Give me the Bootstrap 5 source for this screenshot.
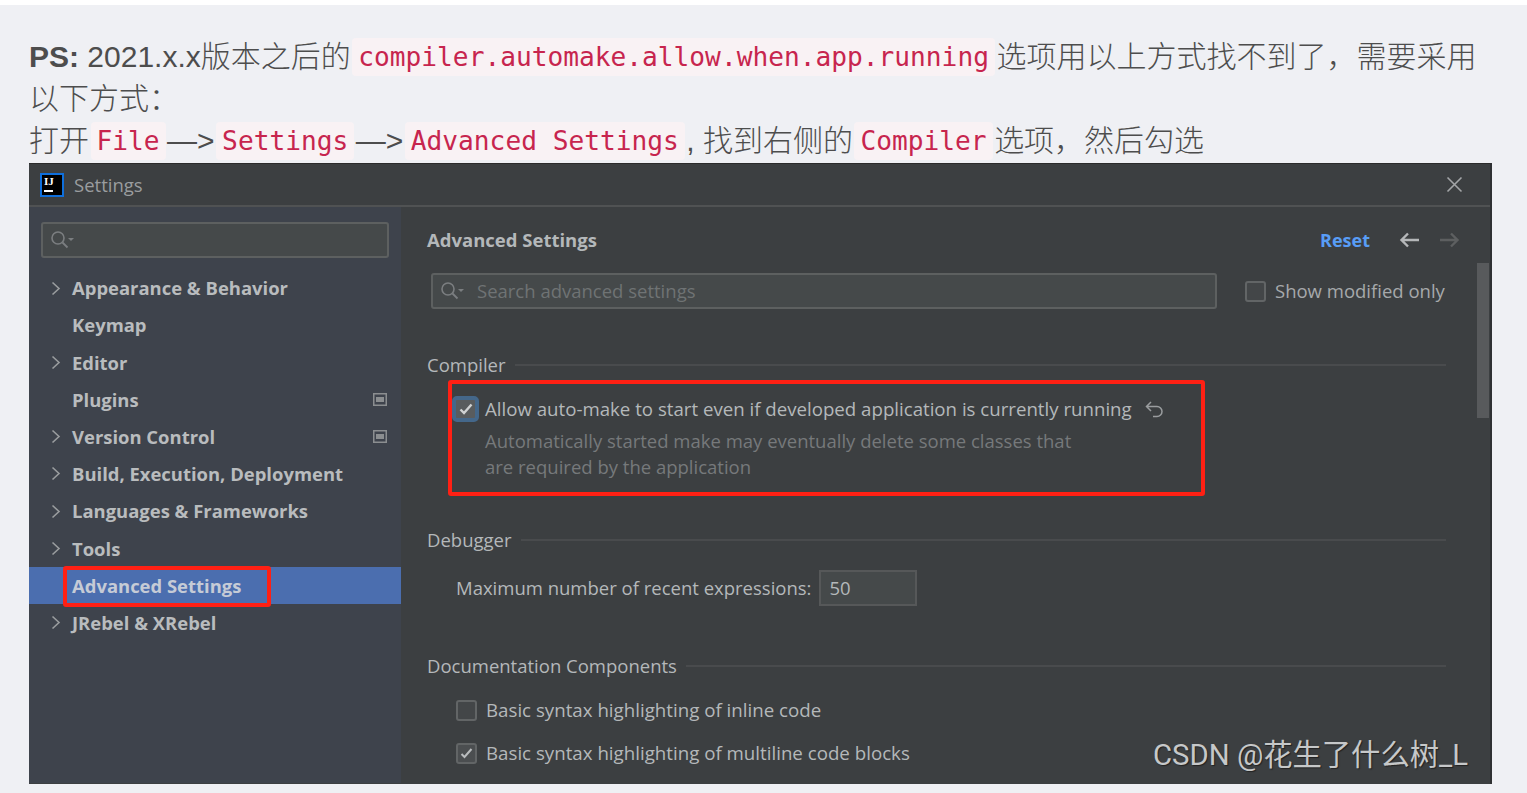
<!DOCTYPE html>
<html lang="zh-CN">
<head>
<meta charset="utf-8">
<title>Settings</title>
<link href="https://cdn.jsdelivr.net/npm/bootstrap@5.3.0/dist/css/bootstrap.min.css" rel="stylesheet">
<style>
html,body{height:793px;overflow:hidden;background:#fff}
.page-bg{margin-top:5px;height:788px;background:#eff0f4;padding:31px 35px 0 29px;overflow:hidden}
.post-text{margin:0;font:300 30px/42px "Liberation Sans","Noto Sans CJK SC",sans-serif;color:#4d4d4d;height:127px}
.post-text b{font-weight:700}
.post-text code{font:26.2px/38px "DejaVu Sans Mono",monospace;color:#c7254e;background:#f9f2f4;padding:4px 6px;border-radius:4px;margin:0 1.5px;vertical-align:1px}
.ide{position:relative;height:621px;background:#3c3f41;border-top:1px solid #2b2b2b;border-right:2px solid #2f3133;overflow:hidden;font-family:"Open Sans",sans-serif;font-size:18.5px;color:#b4b8ba}
.ide-title{height:43px;border-bottom:2px solid #505253;padding-left:11px;gap:10px}
.ide-logo{width:24px;height:24px;background:#000;border:2px solid #0f6fdc;color:#fff;font:700 11px/12px "Liberation Serif",serif;padding-left:2px}
.ide-logo i{display:block;width:9px;height:2px;background:#fff;margin-top:3px}
.ide-title-text{color:#9a9d9f;font-size:18.5px;padding-top:1px}
.ide-close{margin-left:auto;margin-right:27px}
.ide-body{height:576px}
.ide-side{width:372px;background:#3e434c;flex:none;padding-top:15px}
.ide-search{background:#45494a;border:2px solid #5d6060;border-radius:3px;height:36px;padding-left:7px;gap:8px;color:#777}
.ide-search-side{margin:0 12px 11.5px;width:348px}
.ide-row{position:relative;height:37.2px;padding-left:43px;font-weight:700;font-size:18.45px;color:#b9bcbe;white-space:nowrap}
.ide-row.is-active{background:#4b6eaf;color:#c5cbd6}
.ide-chev{position:absolute;left:22px;top:11px}
.ide-mod{margin-left:auto;margin-right:14px}
.ide-redmark{position:absolute;left:34px;top:-1px;width:208px;height:41px;border:4px solid #ff2014;border-radius:3px}
.ide-main{flex:1;min-width:0;padding:15px 0 0 26px;position:relative}
.ide-h{height:36px;font-weight:700;font-size:18.5px;padding-right:30px}
.ide-reset{margin-left:auto;color:#589df6;font-weight:700;font-size:18px;margin-right:29px}
.ide-arrows{gap:21px}
.ide-top{margin-top:15px}
.ide-search-main{width:786px;margin:0 28px 0 4px;color:#777}
.ide-search-main span{font-size:18.5px;color:#6f7374;margin-left:5px}
.ide-box{width:21px;height:21px;border:2px solid #626566;border-radius:3px;background:#434648;flex:none}
.ide-box.checked{background:#4b4e50}
.ide-checkrow{gap:9px}
.ide-topcheck{color:#a6a9ab}
.ide-group{position:relative;padding-right:44px;gap:9px}
.ide-group::after{content:"";flex:1;height:2px;background:#494b4d}
.ide-g1{margin-top:44px;height:24px}
.ide-red{width:757px;height:116px;margin:3px 0 0 21px;border:4px solid #ff2014;border-radius:3px;padding:11px 0 0 0}
.ide-toprow{gap:6px}
.ide-focus{width:27px;height:26px;border:4px solid #44678a;border-radius:5px;background:#595c5e;flex:none}
.ide-label{color:#b4b8ba;white-space:nowrap;font-size:18.67px}
.ide-undo{margin-left:7px}
.ide-desc{color:#76797b;padding-left:33px;line-height:26px;margin-top:5px}
.ide-g2{margin-top:32px;height:24px}
.ide-max{margin:18px 0 0 29px;gap:8px}
.ide-input{width:98px;height:36px;border:2px solid #565859;background:#45494a;padding-left:8px}
.ide-g3{margin-top:48px;height:24px}
.ide-opt{font-size:18.72px}
.ide-o1{margin:20px 0 0 29px;height:24px}
.ide-o2{margin:19px 0 0 29px;height:24px}
.ide-scroll{position:absolute;right:1px;top:56px;width:12px;height:155px;background:#585a5c}
.ide-mark{position:absolute;right:22px;bottom:11px;font:29.3px/36px Roboto,"Noto Sans CJK SC",sans-serif;color:#c6c8c9;text-shadow:1px 1px 1px #222;white-space:nowrap}
</style>
</head>
<body>
<div class="page-bg">
  <p class="post-text"><b>PS:</b> 2021.x.x版本之后的<code>compiler.automake.allow.when.app.running</code>选项用以上方式找不到了，需要采用以下方式：<br>打开<code>File</code>—&gt;<code>Settings</code>—&gt;<code>Advanced Settings</code>, 找到右侧的<code>Compiler</code>选项，然后勾选</p>
  <div class="ide">
    <div class="ide-title d-flex align-items-center">
      <div class="ide-logo">IJ<i></i></div>
      <span class="ide-title-text">Settings</span>
      <svg class="ide-close" width="17" height="17" viewBox="0 0 17 17"><path d="M1.5 1.5l14 14M15.5 1.5l-14 14" stroke="#a3a5a7" stroke-width="1.6" fill="none"/></svg>
    </div>
    <div class="ide-body d-flex">
      <aside class="ide-side">
        <div class="ide-search ide-search-side d-flex align-items-center">
          <svg width="24" height="22" viewBox="0 0 24 22"><circle cx="8" cy="9" r="6" fill="none" stroke="#7b7e80" stroke-width="1.6"/><path d="M12.5 13.5l5 5" stroke="#7b7e80" stroke-width="1.8"/><path d="M18 9h6l-3 3z" fill="#7b7e80"/></svg>
        </div>
        <div class="ide-row d-flex align-items-center"><svg class="ide-chev" width="10" height="15" viewBox="0 0 10 15"><path d="M1.5 1.5l6.5 6-6.5 6" fill="none" stroke="#9a9d9f" stroke-width="1.6"/></svg>Appearance &amp; Behavior</div>
        <div class="ide-row d-flex align-items-center">Keymap</div>
        <div class="ide-row d-flex align-items-center"><svg class="ide-chev" width="10" height="15" viewBox="0 0 10 15"><path d="M1.5 1.5l6.5 6-6.5 6" fill="none" stroke="#9a9d9f" stroke-width="1.6"/></svg>Editor</div>
        <div class="ide-row d-flex align-items-center">Plugins<svg class="ide-mod" width="14" height="13" viewBox="0 0 14 13"><rect x=".75" y=".75" width="12.5" height="11.5" fill="none" stroke="#8b8e90" stroke-width="1.5"/><rect x="3" y="4" width="8" height="5" fill="#8b8e90"/></svg></div>
        <div class="ide-row d-flex align-items-center"><svg class="ide-chev" width="10" height="15" viewBox="0 0 10 15"><path d="M1.5 1.5l6.5 6-6.5 6" fill="none" stroke="#9a9d9f" stroke-width="1.6"/></svg>Version Control<svg class="ide-mod" width="14" height="13" viewBox="0 0 14 13"><rect x=".75" y=".75" width="12.5" height="11.5" fill="none" stroke="#8b8e90" stroke-width="1.5"/><rect x="3" y="4" width="8" height="5" fill="#8b8e90"/></svg></div>
        <div class="ide-row d-flex align-items-center"><svg class="ide-chev" width="10" height="15" viewBox="0 0 10 15"><path d="M1.5 1.5l6.5 6-6.5 6" fill="none" stroke="#9a9d9f" stroke-width="1.6"/></svg>Build, Execution, Deployment</div>
        <div class="ide-row d-flex align-items-center"><svg class="ide-chev" width="10" height="15" viewBox="0 0 10 15"><path d="M1.5 1.5l6.5 6-6.5 6" fill="none" stroke="#9a9d9f" stroke-width="1.6"/></svg>Languages &amp; Frameworks</div>
        <div class="ide-row d-flex align-items-center"><svg class="ide-chev" width="10" height="15" viewBox="0 0 10 15"><path d="M1.5 1.5l6.5 6-6.5 6" fill="none" stroke="#9a9d9f" stroke-width="1.6"/></svg>Tools</div>
        <div class="ide-row is-active d-flex align-items-center">Advanced Settings<span class="ide-redmark"></span></div>
        <div class="ide-row d-flex align-items-center"><svg class="ide-chev" width="10" height="15" viewBox="0 0 10 15"><path d="M1.5 1.5l6.5 6-6.5 6" fill="none" stroke="#9a9d9f" stroke-width="1.6"/></svg>JRebel &amp; XRebel</div>
      </aside>
      <main class="ide-main">
        <div class="ide-h d-flex align-items-center">Advanced Settings
          <span class="ide-reset">Reset</span>
          <span class="ide-arrows d-flex">
            <svg width="20" height="16" viewBox="0 0 20 16"><path d="M20 8H3M9 1.5L2.5 8 9 14.5" fill="none" stroke="#b5b7b9" stroke-width="2.4"/></svg>
            <svg width="20" height="16" viewBox="0 0 20 16"><path d="M0 8h17M11 1.5L17.5 8 11 14.5" fill="none" stroke="#5d5f60" stroke-width="2.4"/></svg>
          </span>
        </div>
        <div class="ide-top d-flex align-items-center">
          <div class="ide-search ide-search-main d-flex align-items-center">
            <svg width="24" height="22" viewBox="0 0 24 22"><circle cx="8" cy="9" r="6" fill="none" stroke="#7b7e80" stroke-width="1.6"/><path d="M12.5 13.5l5 5" stroke="#7b7e80" stroke-width="1.8"/><path d="M18 9h6l-3 3z" fill="#7b7e80"/></svg>
            <span>Search advanced settings</span>
          </div>
          <div class="ide-checkrow ide-topcheck d-flex align-items-center"><span class="ide-box"></span>Show modified only</div>
        </div>
        <div class="ide-group ide-g1 d-flex align-items-center">Compiler</div>
        <div class="ide-red">
          <div class="ide-toprow d-flex align-items-center">
            <span class="ide-focus d-flex align-items-center justify-content-center"><svg width="14" height="12" viewBox="0 0 14 12"><path d="M1.5 6.5l3.5 3.5 7.5-8.5" fill="none" stroke="#d0d2d3" stroke-width="2.4"/></svg></span>
            <span class="ide-label">Allow auto-make to start even if developed application is currently running</span>
            <svg class="ide-undo" width="19" height="17" viewBox="0 0 19 17"><path d="M6 1L1.5 5.5 6 10M1.5 5.5H12a5 5 0 0 1 0 10H8" fill="none" stroke="#9a9d9f" stroke-width="1.5"/></svg>
          </div>
          <div class="ide-desc">Automatically started make may eventually delete some classes that<br>are required by the application</div>
        </div>
        <div class="ide-group ide-g2 d-flex align-items-center">Debugger</div>
        <div class="ide-max d-flex align-items-center"><span>Maximum number of recent expressions:</span><div class="ide-input d-flex align-items-center">50</div></div>
        <div class="ide-group ide-g3 d-flex align-items-center">Documentation Components</div>
        <div class="ide-checkrow ide-opt ide-o1 d-flex align-items-center"><span class="ide-box"></span>Basic syntax highlighting of inline code</div>
        <div class="ide-checkrow ide-opt ide-o2 d-flex align-items-center"><span class="ide-box checked d-flex align-items-center justify-content-center"><svg width="13" height="11" viewBox="0 0 13 11"><path d="M1.5 6l3 3 7-8" fill="none" stroke="#b9bcbe" stroke-width="2"/></svg></span>Basic syntax highlighting of multiline code blocks</div>
        <div class="ide-scroll"></div>
      </main>
    </div>
    <div class="ide-mark">CSDN @花生了什么树_L</div>
  </div>
</div>
<script src="https://cdn.jsdelivr.net/npm/bootstrap@5.3.0/dist/js/bootstrap.bundle.min.js"></script>
</body>
</html>
